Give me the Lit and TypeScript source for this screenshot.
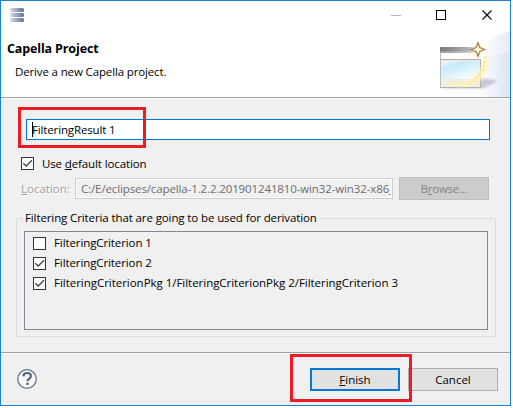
import { LitElement, html, css, svg } from "lit";
import { customElement, property } from "lit/decorators.js";

@customElement("check-row")
class CheckRow extends LitElement {
  @property({ type: Boolean }) checked = false;
  static styles = css`
    :host { display: flex; align-items: center; height: 20px; white-space: pre; }
    .box { width: 13px; height: 13px; flex: none; margin-right: 8px; }
  `;
  render() {
    return html`<svg class="box" viewBox="0 0 13 13">
        <rect x=".5" y=".5" width="12" height="12" fill="#fff" stroke="#333" />
        ${this.checked ? svg`<path d="M2.3 6.2 5.2 9 11 3.2" fill="none" stroke="#444" stroke-width="1.3" />` : ""}
      </svg><slot></slot>`;
  }
}

@customElement("app-root")
class AppRoot extends LitElement {
  static styles = css`
    :host { display: block; width: 513px; height: 408px; background: #fff; overflow: hidden;
      font: 11.5px/16px "Open Sans", "Noto Sans", sans-serif; color: #000; }
    * { box-sizing: border-box; }
    u { text-decoration-thickness: 1px; text-underline-offset: 1px; text-decoration-skip-ink: none; }
    .t { white-space: pre; display: inline-block; }
    .window { position: relative; width: 511px; height: 406px; border: 1px solid #1a80d6; background: #f0f0f0; display: flex; flex-direction: column; }
    .header { height: 97px; flex: none; background: #fff; border-bottom: 1px solid #a0a0a0; display: flex; justify-content: space-between; }
    .heading { padding: 7px 0 0 6px; }
    .logo { display: block; width: 14px; height: 15px; margin: 0 0 18px 3px; }
    .title { font-weight: 700; font-size: 12.5px; letter-spacing: -.14px; }
    .sub { margin: 7px 0 0 8px; }
    .art { display: flex; flex-direction: column; align-items: flex-end; width: 130px; }
    .controls { width: 130px; height: 29px; }
    .banner { width: 75px; height: 67px; }
    .body { height: 255px; flex: none; border-top: 1px solid #fff; border-bottom: 1px solid #a0a0a0; padding: 20px 20px 0 20px; }
    .name { margin-left: 5px; width: 464px; height: 21px; border: 1px solid #0078d7; background: #fff; padding: 2px 0 0 5px; display: flex; }
    .caret { width: 1px; height: 15px; background: #000; margin-right: -1px; }
    .default { margin-top: 13px; }
    .loc { display: flex; align-items: center; height: 23px; margin-top: 4px; color: #6d6d6d; }
    .loclabel { width: 54px; color: #a0a0a0; text-shadow: 1px 1px #fff; }
    .field { width: 318px; height: 21px; border: 1px solid #ccc; box-shadow: inset 0 0 0 1px #fff; padding: 2px 2px 0 5px; margin-right: 6px; }
    .button { width: 90px; height: 23px; border: 1px solid #adadad; background: #e1e1e1; display: flex; align-items: center; justify-content: center; }
    .disabled { background: #ccc; border-color: #bfbfbf; color: #838383; }
    .group { margin: 10px 0 0 -5px; width: 480px; height: 127px; display: grid; }
    .frame { grid-area: 1/1; margin-top: 8px; height: 119px; border: 1px solid #dcdcdc; }
    .groupbody { grid-area: 1/1; position: relative; padding-left: 8px; }
    .legend { background: #f0f0f0; padding-left: 1px; width: 296px; display: block; }
    .list { width: 464px; height: 99px; border: 1px solid #828790; margin-top: 5px; padding: 1px 0 0 8px; }
    .footer { height: 52px; border-top: 1px solid #fff; display: flex; align-items: flex-start; padding: 14px 12px 0 15px; }
    .help { width: 22px; height: 22px; margin-right: auto; }
    .primary { border: 2px solid #0078d7; margin-right: 8px; }
    .s-sub { letter-spacing: -.14px; }
    .s-name { letter-spacing: -.14px; }
    .s-def { letter-spacing: -.12px; padding-top: 1px; }
    .s-path { letter-spacing: -.12px; width: 310px; overflow: hidden; }
    .s-br { letter-spacing: -.22px; }
    .s-leg { letter-spacing: -.11px; }
    .s-c { letter-spacing: -.1px; }
    .s-long { letter-spacing: -.03px; }
    .mark { position: absolute; border: 3px solid #ed1c24; }
    .m1 { left: 17px; top: 106px; width: 128px; height: 41px; }
    .m2 { left: 289px; top: 353px; width: 122px; height: 48px; }
  `;
  render() {
    return html`<div class="window">
      <div class="header">
        <div class="heading">
          <svg class="logo" viewBox="0 0 14 15">
            <defs><linearGradient id="bar"><stop stop-color="#d5d9e5" /><stop offset=".6" stop-color="#8f9cbd" /><stop offset="1" stop-color="#5c719e" /></linearGradient></defs>
            <g fill="url(#bar)"><rect y="0" width="14" height="4" rx="1.5" /><rect y="5" width="14" height="4" rx="1.5" /><rect y="10" width="14" height="4" rx="1.5" /></g>
          </svg>
          <div><span class="t title">Capella Project</span></div>
          <div class="sub"><span class="t s-sub">Derive a new Capella project.</span></div>
        </div>
        <div class="art">
          <svg class="controls" viewBox="380 1 130 29"><path d="M391 15.5h10" stroke="#bbb" /><rect x="436.5" y="10.5" width="9" height="9" fill="none" stroke="#000" /><path d="m482.5 10.5 9 9m0-9-9 9" stroke="#000" stroke-width="1.1" /></svg>
          <svg class="banner" viewBox="435 30 75 67">
            <defs>
              <linearGradient id="sky" x1="0" y1="0" x2=".7" y2="1"><stop stop-color="#f4fbff" /><stop offset=".3" stop-color="#c5e9fb" /><stop offset="1" stop-color="#fafdff" /></linearGradient>
              <linearGradient id="bg"><stop offset=".25" stop-color="#fff" /><stop offset="1" stop-color="#e6ebf7" /></linearGradient>
              <linearGradient id="bg2"><stop offset=".25" stop-color="#fff" /><stop offset="1" stop-color="#dae2f4" /></linearGradient>
              <linearGradient id="tb"><stop stop-color="#777" /><stop offset="1" stop-color="#ccc" /></linearGradient>
              <filter id="soft" x="-20%" y="-20%" width="140%" height="140%"><feGaussianBlur stdDeviation="1.3" /></filter>
            </defs>
            <path d="M470 97V60Q487 37 510 31V97Z" fill="url(#bg)" />
            <path d="M470 97V68Q487 56 510 52V97Z" fill="url(#bg2)" />
            <path d="M439 88.5h45l14-8-14-2z" fill="#99a" opacity=".5" filter="url(#soft)" />
            <rect x="440" y="47" width="41" height="41" fill="#fdfdfd" />
            <path d="M440 47h40v4h-40z" fill="url(#tb)" />
            <path d="M440 51h40v2h-40z" fill="url(#tb)" opacity=".75" />
            <rect x="440.5" y="59.5" width="40" height="28" fill="#efece0" stroke="#b0b0ac" />
            <path d="M440.5 53v35" stroke="#bbb" />
            <rect x="442" y="61" width="37" height="18" fill="url(#sky)" />
            <path d="M436 78Q450 87 466 81T485 52Q494 67 481 80Q462 95 436 78Z" fill="#fff4b8" filter="url(#soft)" opacity=".75" />
            <path d="M468 83q17-8 17-27" fill="none" stroke="#f8e2a4" stroke-width="2.5" stroke-dasharray="2 2.5" />
            <circle cx="478" cy="49.5" r="6" fill="#fff6cf" opacity=".8" filter="url(#soft)" />
            <path d="m478 42.8 1.9 4.8 4.8 1.9-4.8 1.9-1.9 4.8-1.9-4.8-4.8-1.9 4.8-1.9z" fill="#fffbed" stroke="#ad823b" stroke-width="1.3" />
          </svg>
        </div>
      </div>
      <div class="body">
        <div class="name"><i class="caret"></i><span class="t s-name">FilteringResult 1</span></div>
        <check-row class="default" checked><span class="t s-def">Use <u>d</u>efault location</span></check-row>
        <div class="loc"><span class="t loclabel"><u>L</u>ocation:</span>
          <div class="field"><span class="t s-path">C:/E/eclipses/capella-1.2.2.201901241810-win32-win32-x86_</span></div>
          <div class="button disabled"><span class="t s-br">B<u>r</u>owse...</span></div></div>
        <div class="group"><div class="frame"></div><div class="groupbody">
          <span class="t legend s-leg">Filtering Criteria that are going to be used for derivation</span>
          <div class="list">
            <check-row><span class="t s-c">FilteringCriterion 1</span></check-row>
            <check-row checked><span class="t s-c">FilteringCriterion 2</span></check-row>
            <check-row checked><span class="t s-long">FilteringCriterionPkg 1/FilteringCriterionPkg 2/FilteringCriterion 3</span></check-row>
          </div></div></div>
      </div>
      <div class="footer">
        <svg class="help" viewBox="0 0 22 22"><circle cx="11" cy="11" r="9.3" fill="#f7f7f7" stroke="#66758e" stroke-width="1.3" /><path d="M7.4 8.3C7.6 5.8 9 5 11 5c2.3 0 3.9 1.100 3.900 3.100 0 2.600-3.400 2.700-3.400 5.100" fill="none" stroke="#53657f" stroke-width="2.2" /><rect x="10.3" y="14.7" width="2.4" height="2.2" fill="#53657f" /></svg>
        <div class="button primary"><span class="t"><u>F</u>inish</span></div>
        <div class="button"><span class="t">Cancel</span></div>
      </div>
      <div class="mark m1"></div><div class="mark m2"></div>
    </div>`;
  }
}
